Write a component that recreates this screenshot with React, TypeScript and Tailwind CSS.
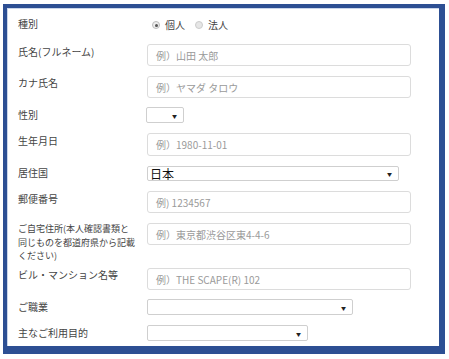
import React from "react";

const font = { fontFamily: '"Noto Sans CJK JP", "Noto Sans", sans-serif' };

function Label({ children, mt = 2 }: { children: React.ReactNode; mt?: number }) {
  return (
    <div
      className="w-[129px] shrink-0 text-[10px] leading-[12px] text-[#444]"
      style={{ marginTop: mt }}
    >
      {children}
    </div>
  );
}

function TextField({ placeholder, h = 22 }: { placeholder: string; h?: number }) {
  return (
    <div
      className="w-[264px] rounded-[3px] border border-[#dcdcdc] bg-white flex items-center pl-[8px] text-[10px] text-[#9a9a9a]"
      style={{ height: h }}
    >
      {placeholder}
    </div>
  );
}

function Select({ w, h = 16, children }: { w: number; h?: number; children?: React.ReactNode }) {
  return (
    <div
      className="flex items-center justify-between border border-[#cfcfcf] bg-white rounded-[2px] pl-[2px] pr-[6px]"
      style={{ width: w, height: h }}
    >
      <span className="text-[12px] leading-none text-[#111]">{children}</span>
      <span className="text-[5px] leading-none text-[#222]">▼</span>
    </div>
  );
}

export default function App() {
  return (
    <div className="w-[449px] h-[359px] bg-white pt-[4px] pl-[3px]" style={font}>
      <div className="w-[442px] h-[350px] border-l-[4px] border-t-[4px] border-r-[6px] border-b-[8px] border-[#2d4f93]">
        <div className="h-full w-full border-t border-l border-[#c9d5ea] pl-[10px] flex flex-col">
          {/* 種別 */}
          <div className="flex h-[35px] items-start">
            <Label mt={9}>種別</Label>
            <div className="mt-[10px] flex items-center text-[10px] leading-[12px] text-[#444]">
              <span className="ml-[5px] w-[8px] h-[8px] rounded-full border border-[#bbb] bg-[#eee] flex items-center justify-center">
                <span className="w-[3px] h-[3px] rounded-full bg-[#555]" />
              </span>
              <span className="ml-[5px]">個人</span>
              <span className="ml-[10px] w-[8px] h-[8px] rounded-full border border-[#ccc] bg-[#e6e6e6]" />
              <span className="ml-[5px]">法人</span>
            </div>
          </div>
          {/* 氏名 */}
          <div className="flex h-[32px] items-start">
            <Label mt={2}>氏名(フルネーム)</Label>
            <TextField placeholder="例）山田 太郎" />
          </div>
          <div className="flex h-[31px] items-start">
            <Label mt={1}>カナ氏名</Label>
            <TextField placeholder="例）ヤマダ タロウ" />
          </div>
          <div className="flex h-[26px] items-start">
            <Label mt={2}>性別</Label>
            <div className="-ml-[1px]">
              <Select w={38} />
            </div>
          </div>
          <div className="flex h-[33px] items-start">
            <Label mt={2}>生年月日</Label>
            <TextField placeholder="例）1980-11-01" h={23} />
          </div>
          <div className="flex h-[25px] items-start">
            <Label mt={1}>居住国</Label>
            <Select w={252} h={15}>日本</Select>
          </div>
          <div className="flex h-[32px] items-start">
            <Label mt={2}>郵便番号</Label>
            <TextField placeholder="例) 1234567" />
          </div>
          <div className="flex h-[45px] items-start">
            <div className="w-[129px] shrink-0 whitespace-nowrap text-[9px] leading-[13.5px] text-[#444] mt-[-1px]">
              ご自宅住所(本人確認書類と
              <br />
              同じものを都道府県から記載
              <br />
              ください)
            </div>
            <TextField placeholder="例）東京都渋谷区東4-4-6" />
          </div>
          <div className="flex h-[31px] items-start">
            <Label mt={1}>ビル・マンション名等</Label>
            <TextField placeholder="例）THE SCAPE(R) 102" />
          </div>
          <div className="flex h-[26px] items-start">
            <Label mt={2}>ご職業</Label>
            <Select w={206} />
          </div>
          <div className="flex h-[21px] items-start">
            <Label mt={2}>主なご利用目的</Label>
            <Select w={161} />
          </div>
        </div>
      </div>
    </div>
  );
}
